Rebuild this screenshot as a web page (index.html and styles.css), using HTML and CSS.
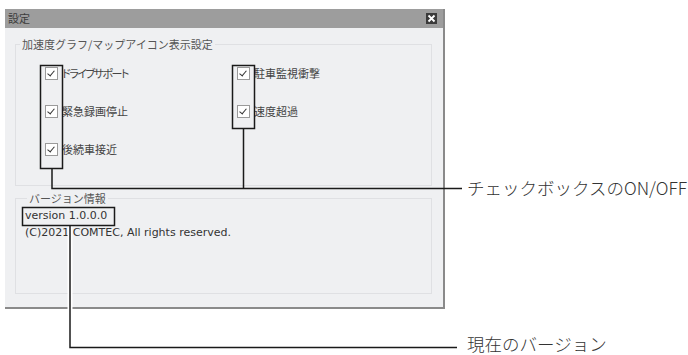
FILE: index.html
```html
<!DOCTYPE html>
<html lang="ja">
<head>
    <meta charset="UTF-8">
    <meta name="viewport" content="width=device-width, initial-scale=1.0">
    <title>設定</title>
    <link rel="stylesheet" href="styles.css">
</head>
<body>
    <div class="page">
        <div class="window">
            <div class="titlebar">
                <span class="title">設定</span>
                <span class="close">
                    <svg width="11" height="11" viewBox="0 0 11 11">
                        <rect width="11" height="11" fill="#3a3a3a"/>
                        <path d="M2.5 2.5 L8.5 8.5 M8.5 2.5 L2.5 8.5" stroke="#fff" stroke-width="1.8"/>
                    </svg>
                </span>
            </div>
            <div class="content">
                <fieldset class="group icons">
                    <legend>加速度グラフ/マップアイコン表示設定</legend>
                    <div class="checks">
                        <label class="check kana"><span class="box"></span>ドライブサポート</label>
                        <label class="check"><span class="box"></span>駐車監視衝撃</label>
                        <label class="check"><span class="box"></span>緊急録画停止</label>
                        <label class="check"><span class="box"></span>速度超過</label>
                        <label class="check"><span class="box"></span>後続車接近</label>
                    </div>
                </fieldset>
                <fieldset class="group version">
                    <legend>バージョン情報</legend>
                    <p class="ver">version 1.0.0.0</p>
                    <p class="copy">(C)2021 COMTEC, All rights reserved.</p>
                </fieldset>
            </div>
        </div>

        <!-- callout lines drawn over the dialog -->
        <svg class="callouts" width="688" height="355" viewBox="0 0 688 355">
            <g fill="none" stroke="#1a1a1a" stroke-width="1.5">
                <rect x="40.5" y="65.5" width="22" height="103"/>
                <rect x="232.5" y="65.5" width="22" height="63"/>
                <path d="M52 169 V188.5 H462 M243.5 129 V188.5"/>
            </g>
            <path d="M70 226 V309" stroke="#fff" stroke-width="5"/>
            <g fill="none" stroke="#1a1a1a" stroke-width="1.5">
                <rect x="22.5" y="207.5" width="92" height="18"/>
                <path d="M70 226 V347.5 H457"/>
            </g>
        </svg>
        <span class="note note-check">チェックボックスのON/OFF</span>
        <span class="note note-ver">現在のバージョン</span>
    </div>
</body>
</html>
```

FILE: styles.css
```css
body {
    margin: 0;
    background: #fff;
    font-family: 'Noto Sans CJK JP', sans-serif;
    color: #444;
}
.page {
    position: relative;
    width: 688px;
    height: 355px;
    overflow: hidden;
}
.window {
    margin: 9px 0 0 5px;
    width: 440px;
    height: 300px;
    box-sizing: border-box;
    background: #eff0f2;
    border-right: 2px solid #8a8a8a;
    border-bottom: 2px solid #8a8a8a;
    display: flex;
    flex-direction: column;
}
.titlebar {
    height: 19px;
    background: #9d9d9d;
    display: flex;
    align-items: center;
    justify-content: space-between;
    padding: 0 6px 0 3px;
}
.title {
    font-size: 11px;
    color: #3c3c3c;
    line-height: 1;
}
.close {
    display: flex;
}
.content {
    padding: 10px 11px 0 10px;
    display: flex;
    flex-direction: column;
    gap: 6px;
}
.group {
    margin: 0;
    border: 1px solid #dfe0e3;
    padding: 0;
    min-width: 0;
}
.group legend {
    font-size: 11px;
    line-height: 13px;
    color: #555;
    padding: 0 2px;
    margin-left: 4px;
}
.icons {
    height: 148px;
    box-sizing: border-box;
}
.checks {
    display: grid;
    grid-template-columns: 192px 1fr;
    row-gap: 25px;
    padding: 16px 0 0 29px;
}
.check {
    display: flex;
    align-items: center;
    gap: 3px;
    font-size: 11px;
    line-height: 13px;
    color: #444;
    font-feature-settings: "palt";
}
.kana {
    letter-spacing: -1.5px;
}
.check:nth-child(5) {
    grid-column: 1;
}
.box {
    width: 13px;
    height: 13px;
    box-sizing: border-box;
    border: 1px solid #9a9a9a;
    background: #fff;
    position: relative;
    margin-right: 1px;
}
.box::after {
    content: "";
    position: absolute;
    left: 3px;
    top: 1px;
    width: 3px;
    height: 6px;
    border-right: 1.5px solid #333;
    border-bottom: 1.5px solid #333;
    transform: rotate(40deg);
}
.version {
    height: 102px;
    box-sizing: border-box;
    padding: 2px 0 0 7px;
}
.ver, .copy {
    margin: 0;
    font-family: 'DejaVu Sans', sans-serif;
    font-size: 11px;
    line-height: 17px;
    color: #333;
}
.ver {
    padding-left: 2px;
}
.copy {
    padding-left: 2px;
}
.callouts {
    position: absolute;
    left: 0;
    top: 0;
}
.note {
    position: absolute;
    left: 467px;
    font-size: 17.5px;
    line-height: 18px;
    color: #333;
    font-weight: 300;
}
.note-check {
    top: 179px;
}
.note-ver {
    top: 335px;
}
```
